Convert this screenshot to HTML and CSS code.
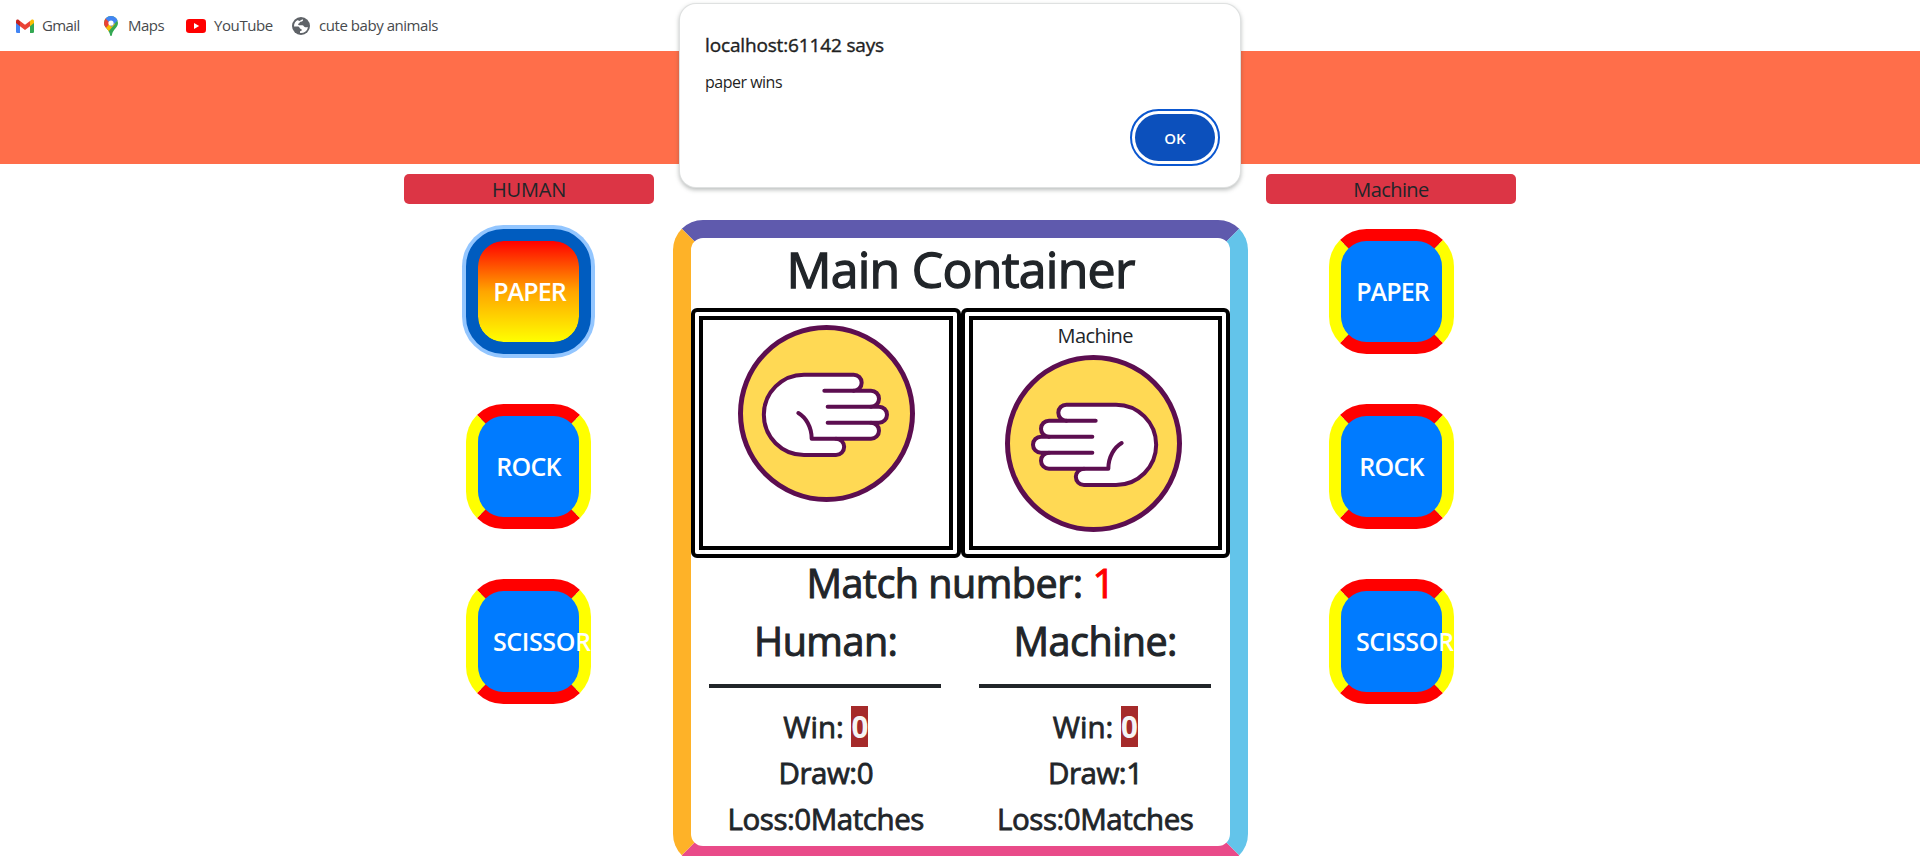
FILE: index.html
```html
<!DOCTYPE html>
<html lang="en">
<head>
<meta charset="utf-8">
<title>Rock Paper Scissors</title>
<link rel="stylesheet" href="styles.css">
</head>
<body>
<svg class="defs" width="0" height="0">
  <symbol id="paper-hand" viewBox="204 345 531 531">
    <circle cx="469.5" cy="610.5" r="258" fill="#ffd954" stroke="#5c0e50" stroke-width="15"/>
    <g stroke="#5c0e50" stroke-width="12" stroke-linecap="round" stroke-linejoin="round">
      <path fill="#fff" d="M402 494H551a24 24 0 0 1 0 48H603a24 24 0 0 1 0 48H627a24 24 0 0 1 0 48H603a24 24 0 0 1 0 48H498a24.500 24.500 0 0 1 0 49H402a120.500 120.500 0 0 1 0-241z"/>
      <path fill="none" d="M463 542H551M473 590H603M473 638H603M498 686H425C425 650 407 622 385 609"/>
    </g>
  </symbol>
</svg>

<nav class="bookmarks">
  <a class="bookmark gmail">
    <svg width="18" height="14" viewBox="0 0 18 14"><path fill="#4285f4" d="M0 3.500h4V14H1.300A1.300 1.300 0 0 1 0 12.700z"/><path fill="#34a853" d="M14 3.500h4v9.200a1.300 1.300 0 0 1-1.300 1.300H14z"/><path fill="#fbbc04" d="M14 2l1.200-1C16.500 0 18 .8 18 2.200V4l-4 3.200z"/><path fill="#c5221f" d="M0 2.200C0 .8 1.500 0 2.800 1L4 2v5.200L0 4z"/><path fill="#ea4335" d="M4 2l5 3.800L14 2v5.200L9 11 4 7.200z"/></svg>
    <span>Gmail</span></a>
  <a class="bookmark maps">
    <svg width="14" height="20" viewBox="0 0 14 20"><defs><clipPath id="pin"><path d="M7 0a7 7 0 0 1 7 7c0 4.500-5 6.500-6 11.500C7.800 19.800 7.500 20 7 20s-.8-.2-1-1.500C5 13.500 0 11.500 0 7a7 7 0 0 1 7-7z"/></clipPath></defs><g clip-path="url(#pin)"><path fill="#34a853" d="M0 0h14v20H0z"/><path fill="#fbbc04" d="M0 13L9 3l2 5-8 9H0z"/><path fill="#ea4335" d="M0 11V2h3l4 4-5 6z"/><path fill="#4285f4" d="M1.500 2.500L2 0h12v4L7 11l-1-4z"/></g><circle cx="7" cy="7" r="2.600" fill="#fff"/></svg>
    <span>Maps</span></a>
  <a class="bookmark youtube">
    <svg width="20" height="14" viewBox="0 0 20 14"><rect width="20" height="14" rx="3.200" fill="#f00"/><path fill="#fff" d="M8 4l5.200 3L8 10z"/></svg>
    <span>YouTube</span></a>
  <a class="bookmark baby">
    <svg width="18" height="18" viewBox="0 0 18 18"><circle cx="9" cy="9" r="9" fill="#5f6368"/><path fill="#fff" d="M10.500 2.200C12 3.500 10 4.600 8.500 4.700c-1 .1-.6 1.600-1.800 1.900-1.300.4-.4 1.700.6 1.700h3c1.700 0 1.300 1.900 2.900 1.900H16A7 7 0 0 1 8 16v-1.800c2 0 2.300-1.600 1-2.200-1.700-.5-1.500-2.600-3-2.600H2a7 7 0 0 1 4-6.400c.5 1 1.500 1.200 2.400.6z"/></svg>
    <span>cute baby animals</span></a>
</nav>

<header class="banner"></header>

<main class="game">
  <section class="player human">
    <div class="badge"><span>HUMAN</span></div>
    <button class="choice selected"><span>PAPER</span></button>
    <button class="choice rock"><span>ROCK</span></button>
    <button class="choice scissor"><span>SCISSOR</span></button>
  </section>

  <section class="board">
    <h1>Main Container</h1>
    <div class="hands">
      <div class="hand-box">
        <svg class="hand first"><use href="#paper-hand"/></svg>
      </div>
      <div class="hand-box">
        <span class="hand-label">Machine</span>
        <svg class="hand flipped"><use href="#paper-hand"/></svg>
      </div>
    </div>
    <h2 class="match">Match number: <b>1</b></h2>
    <div class="scores">
      <div class="score">
        <h2>Human:</h2>
        <hr>
        <h3 class="win">Win: <mark>0</mark></h3>
        <h3>Draw:0</h3>
        <h3>Loss:0Matches</h3>
      </div>
      <div class="score">
        <h2>Machine:</h2>
        <hr>
        <h3 class="win">Win: <mark>0</mark></h3>
        <h3>Draw:1</h3>
        <h3>Loss:0Matches</h3>
      </div>
    </div>
  </section>

  <section class="player machine">
    <div class="badge"><span>Machine</span></div>
    <button class="choice"><span>PAPER</span></button>
    <button class="choice rock"><span>ROCK</span></button>
    <button class="choice scissor"><span>SCISSOR</span></button>
  </section>
</main>

<div class="dialog" role="alertdialog">
  <div class="dialog-title">localhost:61142 says</div>
  <div class="dialog-text">paper wins</div>
  <button class="ok">OK</button>
</div>
</body>
</html>
```

FILE: styles.css
```css
* { box-sizing: border-box; }
body {
  margin: 0;
  height: 856px;
  overflow: hidden;
  background: #fff;
  color: #212529;
  font-family: "Open Sans", "Noto Sans", sans-serif;
}
.defs { display: block; }

.bookmarks {
  display: flex;
  height: 51px;
  padding-left: 16px;
  color: #474a4d;
  font-size: 15px;
}
.bookmark { display: flex; align-items: center; height: 51px; white-space: nowrap; }
.bookmark svg { flex: none; }
.bookmark span { padding-bottom: 2px; }
.gmail { width: 88px; gap: 8px; letter-spacing: -0.6px; }
.maps { width: 82px; gap: 10px; letter-spacing: -0.5px; }
.youtube { width: 106px; gap: 8px; letter-spacing: -0.4px; }
.baby { gap: 9px; letter-spacing: -0.45px; }

.banner { height: 113px; background: #ff6e4a; }

.game { display: flex; justify-content: center; align-items: flex-start; }
.player {
  display: flex;
  flex-direction: column;
  align-items: center;
  width: 250px;
  padding-top: 10px;
}
.human { margin-right: 19px; }
.machine { margin-left: 18px; }
.badge {
  width: 250px;
  height: 30px;
  margin-bottom: 25px;
  border-radius: 5px;
  background: #dc3545;
  font-size: 20px;
  line-height: 31px;
  text-align: center;
}
.human .badge { letter-spacing: -0.2px; }
.machine .badge, .hand-label { letter-spacing: -0.6px; }
.choice {
  width: 125px;
  height: 125px;
  margin: 0 0 50px;
  padding: 0 12px 0 14px;
  border: 12px solid;
  border-color: red yellow;
  border-radius: 30%;
  background: #007bff;
  color: #fff;
  font: 600 25px/37px "Open Sans", "Noto Sans", sans-serif;
  letter-spacing: -0.9px;
  text-align: center;
  white-space: nowrap;
}
.rock { padding: 0 12px; letter-spacing: -0.7px; }
.scissor { padding-left: 15px; letter-spacing: -0.4px; }
.human .choice { margin-right: 1px; }
.machine .choice { margin-left: 1px; }
.selected {
  border-color: #005cbf;
  background: linear-gradient(red, orange, yellow) padding-box, #005cbf;
  box-shadow: 0 0 0 4px #93c6ff;
}

.board {
  width: 575px;
  height: 644px;
  margin-top: 56px;
  border: 18px solid;
  border-color: #5f5aad #63c4ea #e94b89 #feb228;
  border-radius: 30px;
}
h1, h2, h3 {
  margin: 0;
  font-weight: 400;
  text-align: center;
  white-space: nowrap;
  -webkit-text-stroke: 0.8px currentColor;
}
h1 {
  margin-bottom: 9px;
  padding-top: 1px;
  font-size: 50px;
  line-height: 60px;
  letter-spacing: -0.75px;
  -webkit-text-stroke-width: 1.3px;
}
.hands { display: flex; height: 250px; }
.hand-box {
  display: flex;
  flex-direction: column;
  align-items: center;
  flex: 1;
  padding-top: 5px;
  border: 12px double #000;
  border-radius: 6px;
}
.hand { display: block; flex: none; width: 177px; height: 177px; }
.first { margin-left: 1px; }
.hand-label { height: 30px; font-size: 20px; line-height: 22px; }
.flipped { transform: scaleX(-1); margin-right: 3px; }
h2 { padding-top: 1px; font-size: 39.500px; line-height: 49px; letter-spacing: -0.5px; -webkit-text-stroke-width: 1px; }
.match { margin-bottom: 8px; }
.match b { color: red; font-weight: 400; }
.scores { display: flex; }
.score { flex: 1; }
hr { height: 4px; margin: 18px 19.500px 21px 18px; border: 0; background: #212529; }
h3 { margin-bottom: 10px; font-size: 29.500px; line-height: 36px; letter-spacing: -0.45px; }
.win { letter-spacing: 0; }
mark { background: brown; color: #f5f5f5; font-weight: 700; -webkit-text-stroke-width: 0; }

.dialog {
  position: absolute;
  top: 4px;
  left: 680px;
  display: flex;
  flex-direction: column;
  width: 560px;
  height: 183px;
  padding: 26px 25px 0;
  border-radius: 16px;
  background: #fff;
  box-shadow: 0 0 0 1px #dfe1e1, 0 2px 4px 1px rgba(60, 70, 67, .35);
  color: #1f1f1f;
}
.dialog-title { font-size: 19px; line-height: 30px; letter-spacing: -0.15px; -webkit-text-stroke: 0.4px currentColor; }
.dialog-text { margin-top: 10px; font-size: 16px; line-height: 24px; letter-spacing: -0.5px; }
.ok {
  align-self: flex-end;
  width: 80px;
  height: 47px;
  margin-top: 20px;
  padding: 0;
  border: 0;
  border-radius: 24px;
  outline: 2px solid #0b57d0;
  outline-offset: 3px;
  background: #0c50bc;
  color: #fff;
  font: 600 15px "Open Sans", "Noto Sans", sans-serif;
}
```
